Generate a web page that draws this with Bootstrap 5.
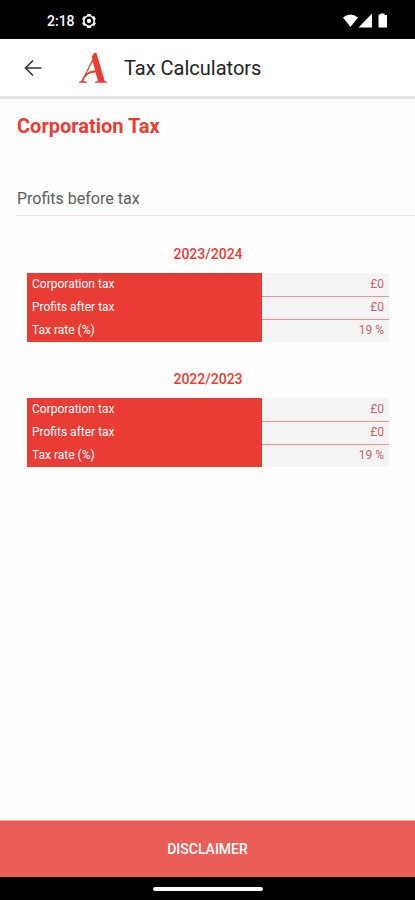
<!DOCTYPE html>
<html lang="en">
<head>
<meta charset="utf-8">
<meta name="viewport" content="width=device-width, initial-scale=1">
<title>Tax Calculators</title>
<link href="https://cdn.jsdelivr.net/npm/bootstrap@5.3.0/dist/css/bootstrap.min.css" rel="stylesheet">
<style>
:root { --brand: #e83c35; }
body { font-family: Roboto, "Liberation Sans", sans-serif; background: #fefefe; }
.status-bar { height: 39px; padding: 2px 27px 0 47px; font-size: 14px; line-height: 20px; }
.status-gear { margin-left: 6px; }
.app-bar { height: 60px; padding: 0 24px; border-bottom: 3px solid #e2e2e2; }
.app-title { font-size: 20px; line-height: 24px; color: #222; margin-left: 16px; }
.logo { margin-left: 36px; }
.form-area { padding-left: 17px; }
.page-title { font-size: 20px; line-height: 24px; font-weight: 700; color: var(--brand); margin: 15px 0 48px; }
.profit-input { font-size: 16px; line-height: 24px; height: 30px; transition: none; }
.profit-input, .profit-input:focus { color: #555; background: transparent; box-shadow: none; border-color: #ffd9d9; }
.profit-input::placeholder { color: #5c5c5c; opacity: 1; }
.results { padding: 28px 26px 0 27px; }
.year-table { font-size: 12px; line-height: 15px; margin-bottom: 27px; table-layout: fixed; caption-side: top; }
.year-table caption { font-size: 14px; line-height: 20px; font-weight: 500; color: var(--brand); padding: 0 0 9px; }
.year-table th, .year-table td { height: 23px; padding: 3px 5px; }
.year-table th { width: 65%; font-weight: 400; color: #fff; background: var(--brand); }
.year-table td { color: #c9616b; background: #f4f4f4; }
.year-table tr + tr td { border-top: 1px solid #ee8f8e; }
.disclaimer { height: 57px; font-size: 14px; font-weight: 500; background: #eb5e58; border-top: 1px solid #f5aaa7; }
.system-nav { height: 23px; }
.home-pill { width: 110px; height: 4px; }
</style>
</head>
<body class="d-flex flex-column min-vh-100">
<div class="status-bar bg-black text-white d-flex align-items-center">
  <span class="fw-medium">2:18</span>
  <svg class="status-gear" width="16" height="16" viewBox="0 0 24 24" aria-hidden="true">
    <circle cx="12" cy="12" r="7.800" fill="none" stroke="#fff" stroke-width="2.400"/>
    <path stroke="#fff" stroke-width="5.500" d="M12 1.500v2.500M12 20v2.500M3 6.800l2 1.200M19 16l2 1.200M3 17.200 5 16M19 8l2-1.200"/>
    <circle cx="12" cy="12" r="3.200" fill="#fff"/>
  </svg>
  <svg class="ms-auto" width="46" height="16" viewBox="0 0 46 16" fill="#fff" aria-hidden="true">
    <path d="M1 4.500Q8.500 -1.500 16 4.500L8.500 14z"/>
    <path d="M16.500 14.500 30 .500v14z"/>
    <path d="M37 1.500h1.500V.500h4v1.500H45v12.500h-8.500V1.500z"/>
  </svg>
</div>
<header class="app-bar bg-white d-flex align-items-center">
  <button type="button" class="btn p-0 border-0 d-flex" aria-label="Back">
    <svg width="18" height="18" viewBox="0 0 18 18" fill="none" stroke="#333" stroke-width="1.600"><path d="M17.500 9H2M9 1.500 1.500 9 9 16.500"/></svg>
  </button>
  <svg class="logo" width="30" height="32" viewBox="0 0 30 32" fill="#e83c35" aria-hidden="true">
    <path fill-rule="evenodd" d="M16 1h2.500L26.700 29l2.300 .8v1H17v-1l3-.8-2.500-8.500c-5-.2-8.800 2-11.200 6L5.500 29l3.500.8v1H1v-1l2.300-.8L14.500 7l-.8-2zM14.800 9.500 8.300 21.500q4-3.300 8.800-3z"/>
  </svg>
  <span class="app-title">Tax Calculators</span>
</header>
<main class="flex-grow-1">
  <div class="form-area">
    <h1 class="page-title">Corporation Tax</h1>
    <input class="profit-input form-control border-top-0 border-start-0 border-end-0 rounded-0 p-0 pb-1" type="text" inputmode="decimal" placeholder="Profits before tax" aria-label="Profits before tax">
  </div>
  <div class="results">
    <table class="year-table w-100">
      <caption class="text-center">2023/2024</caption>
      <tbody>
        <tr><th scope="row">Corporation tax</th><td class="text-end">£0</td></tr>
        <tr><th scope="row">Profits after tax</th><td class="text-end">£0</td></tr>
        <tr><th scope="row">Tax rate (%)</th><td class="text-end">19 %</td></tr>
      </tbody>
    </table>
    <table class="year-table w-100">
      <caption class="text-center">2022/2023</caption>
      <tbody>
        <tr><th scope="row">Corporation tax</th><td class="text-end">£0</td></tr>
        <tr><th scope="row">Profits after tax</th><td class="text-end">£0</td></tr>
        <tr><th scope="row">Tax rate (%)</th><td class="text-end">19 %</td></tr>
      </tbody>
    </table>
  </div>
</main>
<button type="button" class="disclaimer btn text-white border-start-0 border-end-0 border-bottom-0 rounded-0 w-100">DISCLAIMER</button>
<div class="system-nav bg-black d-flex align-items-center justify-content-center"><div class="home-pill bg-white rounded-pill"></div></div>
<script src="https://cdn.jsdelivr.net/npm/bootstrap@5.3.0/dist/js/bootstrap.bundle.min.js"></script>
</body>
</html>
